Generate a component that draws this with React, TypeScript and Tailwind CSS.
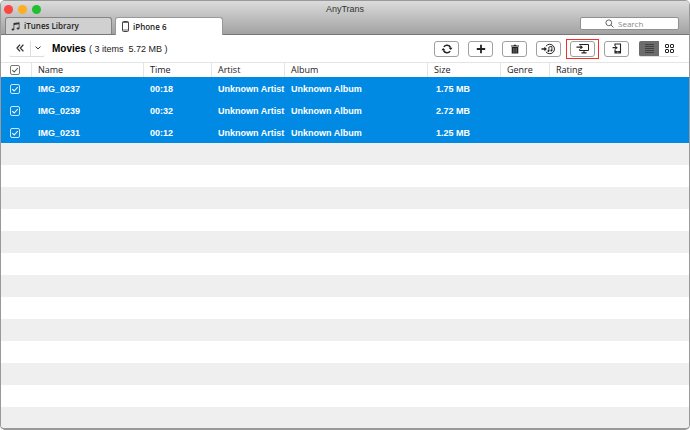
import React, { useState } from "react";

type Movie = { name: string; time: string; artist: string; album: string; size: string };

const movies: Movie[] = [
  { name: "IMG_0237", time: "00:18", artist: "Unknown Artist", album: "Unknown Album", size: "1.75 MB" },
  { name: "IMG_0239", time: "00:32", artist: "Unknown Artist", album: "Unknown Album", size: "2.72 MB" },
  { name: "IMG_0231", time: "00:12", artist: "Unknown Artist", album: "Unknown Album", size: "1.25 MB" },
];

const headings = ["Name", "Time", "Artist", "Album", "Size", "Genre", "Rating"];

function Tick({ label, light }: { label: string; light?: boolean }) {
  return (
    <span className={`relative block size-[10px] ${light ? "text-white" : "text-[#555555]"}`}>
      <input
        type="checkbox"
        defaultChecked
        aria-label={label}
        className="peer block size-[10px] appearance-none rounded-[2px] border border-current opacity-80"
      />
      <svg
        viewBox="0 0 10 10"
        className="pointer-events-none absolute inset-0 hidden size-[10px] peer-checked:block"
        fill="none"
        stroke="currentColor"
        strokeWidth="1.1"
      >
        <path d="M2.3 5.2 4.2 7 7.8 3" />
      </svg>
    </span>
  );
}

function ToolButton({ label, children }: { label: string; children: React.ReactNode }) {
  return (
    <button
      type="button"
      aria-label={label}
      className="flex h-4 w-[25px] items-center justify-center rounded-[3px] border border-[#a0a0a0] bg-white text-[#222222]"
    >
      {children}
    </button>
  );
}

function MusicIcon() {
  return (
    <svg viewBox="0 0 9 9" className="size-[9px]" fill="#333333">
      <path d="M2.5 1 8.5.2V6.400H7.700V2.300L3.300 2.900V7.400H2.500z" />
      <ellipse cx="1.9" cy="7.5" rx="1.4" ry="1" />
      <ellipse cx="7" cy="6.600" rx="1.4" ry="1" />
    </svg>
  );
}

function PhoneIcon() {
  return (
    <svg viewBox="0 0 7 11" className="h-[11px] w-[7px]">
      <rect x=".5" y=".5" width="6" height="10" rx="1" fill="white" stroke="#444444" />
      <path d="M.5 1.500h6M.5 9h6" stroke="#444444" strokeWidth=".8" />
    </svg>
  );
}

function RefreshIcon() {
  return (
    <svg viewBox="0 0 12 12" className="size-3" fill="none" stroke="currentColor" strokeWidth="1.5">
      <path d="M2.8 3.900A4 4 0 0 1 9.600 4.600M9.200 8.100A4 4 0 0 1 2.400 7.400" />
      <path d="M7.600 4.700H11.600L9.800 7zM4.400 7.300H.4L2.200 5z" fill="currentColor" stroke="none" />
    </svg>
  );
}

function TrashIcon() {
  return (
    <svg viewBox="0 0 10 10" className="size-[10px]" fill="currentColor">
      <path d="M1 1.400h2.800V.7h2.400v.7H9v1.100H1zM1.700 3.100h6.600V9.500H1.700z" />
      <path d="M3.600 4v4.700M5 4v4.700M6.400 4v4.700" stroke="#999999" strokeWidth=".5" />
    </svg>
  );
}

function ToItunesIcon() {
  return (
    <svg viewBox="0 0 15 12" className="h-3 w-[15px]" fill="none" stroke="currentColor">
      <path d="M4.900 3.300A4.700 4.700 0 1 1 4.900 8.700" strokeWidth="1" />
      <path d="M.5 6h4" strokeWidth="1.4" />
      <path d="M3.300 3.800 6 6 3.300 8.200z" fill="currentColor" stroke="none" />
      <path d="M7.900 8V4l3-.6v4.100" strokeWidth=".9" />
      <circle cx="7.4" cy="8" r="1" fill="currentColor" stroke="none" />
      <circle cx="10.4" cy="7.5" r="1" fill="currentColor" stroke="none" />
    </svg>
  );
}

function ToComputerIcon() {
  return (
    <svg viewBox="0 0 13 11" className="h-[11px] w-[13px]" fill="none" stroke="currentColor">
      <path d="M3.500 2.200V1.500h9v6h-9V6.300" />
      <path d="M8 7.500v2M5.500 9.900h5" strokeWidth="1.1" />
      <path d="M.5 4.200H5" strokeWidth="1.3" />
      <path d="M4.400 2 7 4.200 4.400 6.400z" fill="currentColor" stroke="none" />
    </svg>
  );
}

function ToDeviceIcon() {
  return (
    <svg viewBox="0 0 10 11" className="h-[11px] w-[10px]" fill="none" stroke="currentColor">
      <path d="M3 3V1h5.500v9H3V6.500" strokeWidth="1.1" />
      <path d="M3 8.900h5.500" strokeWidth="1.8" />
      <path d="M.6 4.700h3" strokeWidth="1.3" />
      <path d="M3.200 2.700 5.800 4.700 3.200 6.700z" fill="currentColor" stroke="none" />
      <circle cx="5.8" cy="9" r=".6" fill="white" stroke="none" />
    </svg>
  );
}

export default function App() {
  const [view, setView] = useState<"list" | "grid">("list");

  return (
    <div className="flex min-h-screen flex-col overflow-hidden rounded-[5px] border border-b-2 border-[#999999] bg-white font-['Liberation_Sans',Arial,sans-serif] text-[#222222]">
      <header className="flex flex-col border-b border-[#777777] bg-linear-to-b from-[#dcdcdc] to-[#a2a2a2]">
        <div className="grid h-4 grid-cols-[1fr_auto_1fr] items-center px-[3px]">
          <div className="flex gap-[5px]">
            <button type="button" aria-label="Close" className="size-[9px] rounded-full bg-[#fc4641]" />
            <button type="button" aria-label="Minimize" className="size-[9px] rounded-full bg-[#fdae22]" />
            <button type="button" aria-label="Zoom" className="size-[9px] rounded-full bg-[#20bf30]" />
          </div>
          <h1 className="text-[9px] leading-4 text-[#333333]">AnyTrans</h1>
        </div>
        <div className="flex h-[17px] items-start justify-between pr-[10px] pl-1">
          <nav className="flex h-[18px] gap-[3px] font-['Open_Sans',sans-serif] text-[8px] font-semibold">
            <button
              type="button"
              className="mb-px flex w-[107px] items-center gap-[4px] rounded-t-[3px] border border-b-0 border-[#858585] bg-[#d0d0d0] pl-[5px]"
            >
              <MusicIcon />
              iTunes Library
            </button>
            <button
              type="button"
              className="flex w-[108px] items-center gap-[4px] rounded-t-[3px] border border-b-0 border-[#999999] bg-white pl-[6px]"
            >
              <PhoneIcon />
              iPhone 6
            </button>
          </nav>
          <label className="flex h-[13px] w-[99px] items-center gap-1 rounded-[2px] border border-[#909090] bg-white pl-6">
            <svg viewBox="0 0 9 9" className="size-[9px] shrink-0" fill="none" stroke="#666666">
              <circle cx="3.8" cy="3.8" r="2.9" />
              <path d="m6 6 2.500 2.500" />
            </svg>
            <input
              type="text"
              placeholder="Search"
              aria-label="Search"
              className="h-[11px] w-full min-w-0 bg-transparent font-['Open_Sans',sans-serif] text-[8px] outline-none placeholder:text-[#888888]"
            />
          </label>
        </div>
      </header>

      <div className="flex h-[27px] items-center justify-between pr-[10px] pl-2">
        <div className="flex items-center">
          <div className="flex h-4 rounded-[2px] border-b border-[#dddddd] text-[#333333]">
            <button type="button" aria-label="Back" className="flex w-[22px] items-center justify-center border-r border-[#dddddd]">
              <svg viewBox="0 0 8 8" className="size-2" fill="none" stroke="currentColor" strokeWidth="1.3">
                <path d="M4 .6 1 4l3 3.400M7.400.6l-3 3.400 3 3.400" />
              </svg>
            </button>
            <button type="button" aria-label="More" className="flex w-[14px] items-center justify-center">
              <svg viewBox="0 0 6 4" className="h-1 w-[6px]" fill="none" stroke="currentColor">
                <path d="M.5.6 3 2.900 5.500.6" />
              </svg>
            </button>
          </div>
          <h2 className="ml-[7px] flex items-baseline gap-[3px] whitespace-pre text-[10px] leading-4 font-bold text-black">
            Movies
            <span className="text-[9px] font-normal text-[#222222]">( 3 items{"  "}5.72 MB )</span>
          </h2>
        </div>

        <div className="flex items-center gap-[9px]">
          <ToolButton label="Refresh"><RefreshIcon /></ToolButton>
          <ToolButton label="Add">
            <svg viewBox="0 0 10 10" className="size-[10px]" stroke="currentColor" strokeWidth="1.8">
              <path d="M5 .8V9.200M.8 5H9.200" />
            </svg>
          </ToolButton>
          <ToolButton label="Delete"><TrashIcon /></ToolButton>
          <ToolButton label="To iTunes"><ToItunesIcon /></ToolButton>
          <div className="-mx-1 border border-[#f03028] px-[3px] py-px">
            <ToolButton label="To computer"><ToComputerIcon /></ToolButton>
          </div>
          <ToolButton label="To device"><ToDeviceIcon /></ToolButton>
          <div className="ml-px flex h-4 overflow-hidden rounded-[2px] border-b border-[#dddddd]">
            <button
              type="button"
              aria-label="List view"
              aria-pressed={view === "list"}
              onClick={() => setView("list")}
              className="flex w-5 items-center justify-center bg-[#6c6c6c]"
            >
              <svg viewBox="0 0 9 9" className="size-[9px]" stroke="#404040">
                <path d="M0 .5h9M0 2.500h9M0 4.500h9M0 6.500h9M0 8.500h9" />
              </svg>
            </button>
            <button
              type="button"
              aria-label="Grid view"
              aria-pressed={view === "grid"}
              onClick={() => setView("grid")}
              className="flex w-5 items-center justify-center"
            >
              <svg viewBox="0 0 9 9" className="size-[9px]" fill="none" stroke="#222222">
                <rect x=".5" y=".5" width="3" height="3" rx=".5" />
                <rect x="5.5" y=".5" width="3" height="3" rx=".5" />
                <rect x=".5" y="5.5" width="3" height="3" rx=".5" />
                <rect x="5.5" y="5.5" width="3" height="3" rx=".5" />
              </svg>
            </button>
          </div>
        </div>
      </div>

      <table className="w-full table-fixed border-separate border-spacing-0 text-left">
        <colgroup>
          <col className="w-[31px]" />
          <col className="w-[112px]" />
          <col className="w-[68px]" />
          <col className="w-[73px]" />
          <col className="w-[143px]" />
          <col className="w-[73px]" />
          <col className="w-[49px]" />
          <col />
        </colgroup>
        <thead>
          <tr className="h-[15px] font-['Open_Sans',sans-serif] text-[9px] leading-[14px]">
            <th scope="col" className="border-t border-r border-[#e4e4e4] py-0 pr-0 pl-[9px] font-normal">
              <Tick label="Select all" />
            </th>
            {headings.map((heading) => (
              <th
                key={heading}
                scope="col"
                className="border-t border-r border-[#e4e4e4] py-0 pr-0 pl-[6px] font-medium last:border-r-0"
              >
                {heading}
              </th>
            ))}
          </tr>
        </thead>
        <tbody className="bg-[#018ae4] text-[9px] leading-5 font-bold whitespace-nowrap text-white">
          {movies.map((movie) => (
            <tr key={movie.name} className="h-[22px]">
              <td className="pt-[2px] pr-0 pb-0 pl-[9px]">
                <Tick label={movie.name} light />
              </td>
              <td className="pt-[2px] pr-0 pb-0 pl-[6px]">{movie.name}</td>
              <td className="pt-[2px] pr-0 pb-0 pl-[6px]">{movie.time}</td>
              <td className="pt-[2px] pr-0 pb-0 pl-[6px]">{movie.artist}</td>
              <td className="pt-[2px] pr-0 pb-0 pl-[6px]">{movie.album}</td>
              <td className="pt-[2px] pr-0 pb-0 pl-2">{movie.size}</td>
              <td className="p-0" />
              <td className="p-0" />
            </tr>
          ))}
        </tbody>
      </table>

      <div className="flex-1 bg-[repeating-linear-gradient(to_bottom,#efefef_0px,#efefef_22px,#ffffff_22px,#ffffff_44px)]" />
    </div>
  );
}
